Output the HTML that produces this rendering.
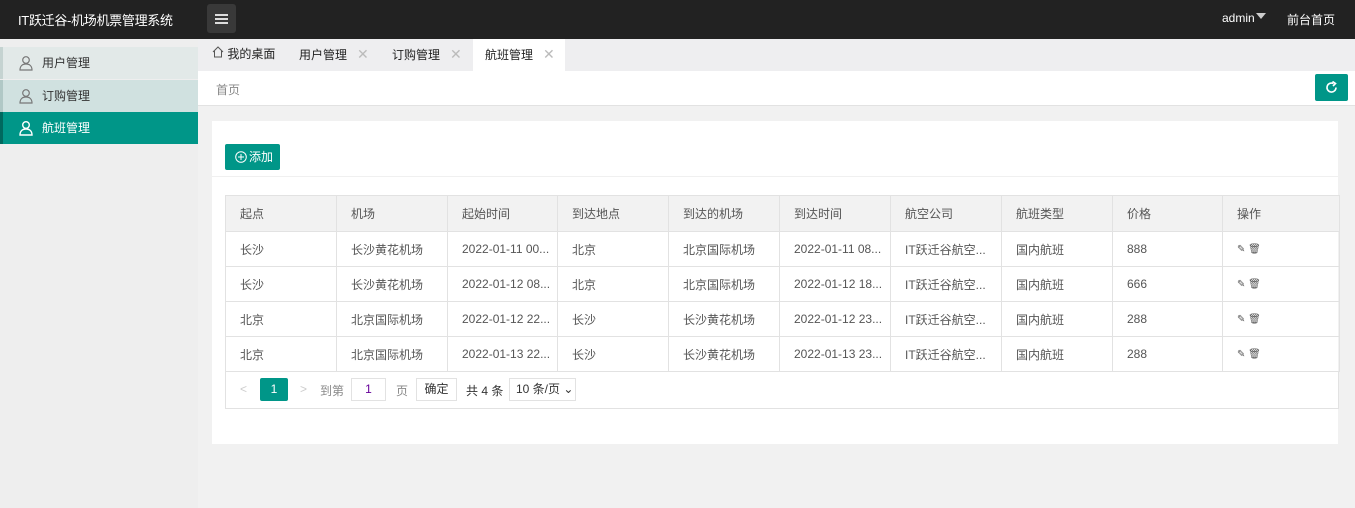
<!DOCTYPE html>
<html><head><meta charset="utf-8"><style>
*{margin:0;padding:0;box-sizing:border-box}
body{width:1355px;height:508px;overflow:hidden;background:#f1f1f1;font-family:"Liberation Sans","Noto Sans CJK SC",sans-serif;font-size:12px;color:#333;position:relative}
.top{position:absolute;left:0;top:0;width:1355px;height:39px;background:#222}
.logo{position:absolute;left:18px;top:10px;color:#fff;font-size:13px;letter-spacing:-0.3px}
.menu{position:absolute;left:207px;top:4px;width:29px;height:29px;background:#393939;border-radius:3px}
.menu i{position:absolute;left:8px;width:13px;height:2px;background:#ddd}
.side{position:absolute;left:0;top:39px;width:198px;height:469px;background:#eee}
.si{position:absolute;left:0;width:198px;height:32px;line-height:32px;padding-left:39px;font-size:12px}
.si svg{position:absolute;left:15px;top:8px}
.tabs{position:absolute;left:198px;top:39px;width:1157px;height:32px;background:#eeeef0}
.tab{position:absolute;top:0;height:32px;line-height:31px;font-size:12px;color:#222}
.x{color:#bbb;margin-left:10px;font-size:14px}
.bc{position:absolute;left:198px;top:71px;width:1157px;height:35px;background:#fff;border-bottom:1px solid #e2e2e2}
.card{position:absolute;left:212px;top:121px;width:1126px;height:323px;background:#fff}
table{position:absolute;left:225px;top:195px;width:1114px;border-collapse:collapse;table-layout:fixed}
td,th{border:1px solid #e2e2e2;height:35px;padding-left:14px;text-align:left;font-weight:normal;font-size:12px;color:#555;white-space:nowrap;overflow:hidden}
th{background:#f2f2f2;height:36px}
</style></head><body>
<div class="top">
<div class="logo">IT跃迁谷-机场机票管理系统</div>
<div class="menu"><i style="top:10px"></i><i style="top:14px"></i><i style="top:18px"></i></div>
<div style="position:absolute;left:1222px;top:11px;color:#fff;font-size:12px">admin</div>
<div style="position:absolute;left:1256px;top:13px;border:5px solid transparent;border-top:6px solid #ccc"></div>
<div style="position:absolute;left:1287px;top:11px;color:#fff;font-size:12px">前台首页</div>
</div>
<div class="side">
<div class="si" style="top:8px;background:#e2e9e8;border-left:3px solid #c5d3d1"><svg width="16" height="16" viewBox="0 0 16 16" fill="none" stroke="#777" stroke-width="1.2"><circle cx="8" cy="5" r="3.3"/><path d="M2 15c0-4 2.5-6 6-6s6 2 6 6z"/></svg>用户管理</div>
<div class="si" style="top:41px;background:#d0e1e0;border-left:3px solid #b0c8c6"><svg width="16" height="16" viewBox="0 0 16 16" fill="none" stroke="#777" stroke-width="1.2"><circle cx="8" cy="5" r="3.3"/><path d="M2 15c0-4 2.5-6 6-6s6 2 6 6z"/></svg>订购管理</div>
<div class="si" style="top:73px;background:#009688;color:#fff;border-left:3px solid #00695f"><svg width="16" height="16" viewBox="0 0 16 16" fill="none" stroke="#fff" stroke-width="1.4"><circle cx="8" cy="5" r="3.3"/><path d="M2 15c0-4 2.5-6 6-6s6 2 6 6z"/></svg>航班管理</div>
</div>
<div class="tabs">
<div class="tab" style="left:14px"><svg width="12" height="12" viewBox="0 0 12 12" fill="none" stroke="#555"><path d="M1 6L6 1l5 5M2.5 5v6h7V5"/></svg> 我的桌面</div>
<div class="tab" style="left:101px">用户管理<span class="x">✕</span></div>
<div class="tab" style="left:194px">订购管理<span class="x">✕</span></div>
<div class="tab" style="left:275px;width:92px;background:#fff;padding-left:12px">航班管理<span class="x">✕</span></div>
</div>
<div class="bc"><span style="position:absolute;left:18px;top:10px;color:#888">首页</span>
<div style="position:absolute;left:1117px;top:3px;width:33px;height:27px;background:#009688;border-radius:2px"><svg style="position:absolute;left:10px;top:7px" width="13" height="13" viewBox="0 0 13 13" fill="none" stroke="#fff" stroke-width="1.6"><path d="M11 6.5A4.5 4.5 0 1 1 8.5 2.5"/><path d="M7.5 0.5l3 2-2.5 2.5" /></svg></div></div>
<div class="card">
<div style="position:absolute;left:13px;top:23px;width:55px;height:26px;background:#009688;border-radius:2px;color:#fff;line-height:26px;padding-left:24px"><svg style="position:absolute;left:10px;top:7px" width="12" height="12" viewBox="0 0 12 12" fill="none" stroke="#fff"><circle cx="6" cy="6" r="5.3"/><path d="M6 3v6M3 6h6"/></svg>添加</div>
<div style="position:absolute;left:0;top:55px;width:1126px;height:1px;background:#f0f0f0"></div>
</div>
<table>
<colgroup><col style="width:111px"><col style="width:111px"><col style="width:110px"><col style="width:111px"><col style="width:111px"><col style="width:111px"><col style="width:111px"><col style="width:111px"><col style="width:110px"><col style="width:117px"></colgroup>
<tr><th>起点</th><th>机场</th><th>起始时间</th><th>到达地点</th><th>到达的机场</th><th>到达时间</th><th>航空公司</th><th>航班类型</th><th>价格</th><th>操作</th></tr>
<tr><td>长沙</td><td>长沙黄花机场</td><td>2022-01-11 00...</td><td>北京</td><td>北京国际机场</td><td>2022-01-11 08...</td><td>IT跃迁谷航空...</td><td>国内航班</td><td>888</td><td style="font-size:10px">✎ 🗑</td></tr>
<tr><td>长沙</td><td>长沙黄花机场</td><td>2022-01-12 08...</td><td>北京</td><td>北京国际机场</td><td>2022-01-12 18...</td><td>IT跃迁谷航空...</td><td>国内航班</td><td>666</td><td style="font-size:10px">✎ 🗑</td></tr>
<tr><td>北京</td><td>北京国际机场</td><td>2022-01-12 22...</td><td>长沙</td><td>长沙黄花机场</td><td>2022-01-12 23...</td><td>IT跃迁谷航空...</td><td>国内航班</td><td>288</td><td style="font-size:10px">✎ 🗑</td></tr>
<tr><td>北京</td><td>北京国际机场</td><td>2022-01-13 22...</td><td>长沙</td><td>长沙黄花机场</td><td>2022-01-13 23...</td><td>IT跃迁谷航空...</td><td>国内航班</td><td>288</td><td style="font-size:10px">✎ 🗑</td></tr>
</table>
<div style="position:absolute;left:225px;top:372px;width:1114px;height:37px;border:1px solid #e2e2e2;border-top:0;background:#fff;font-size:12px">
<span style="position:absolute;left:14px;top:10px;color:#ccc">&lt;</span>
<div style="position:absolute;left:34px;top:6px;width:28px;height:23px;background:#009688;color:#fff;text-align:center;line-height:23px;border-radius:2px">1</div>
<span style="position:absolute;left:74px;top:10px;color:#ccc">&gt;</span>
<span style="position:absolute;left:94px;top:10px;color:#888">到第</span>
<div style="position:absolute;left:125px;top:6px;width:35px;height:23px;border:1px solid #e2e2e2;text-align:center;line-height:21px;color:#609">1</div>
<span style="position:absolute;left:170px;top:10px;color:#888">页</span>
<div style="position:absolute;left:190px;top:6px;width:41px;height:23px;border:1px solid #e2e2e2;text-align:center;line-height:21px">确定</div>
<span style="position:absolute;left:240px;top:10px">共 4 条</span>
<div style="position:absolute;left:283px;top:6px;width:67px;height:23px;border:1px solid #e2e2e2;line-height:21px;padding-left:6px">10 条/页 ⌄</div>
</div>
</body></html>
